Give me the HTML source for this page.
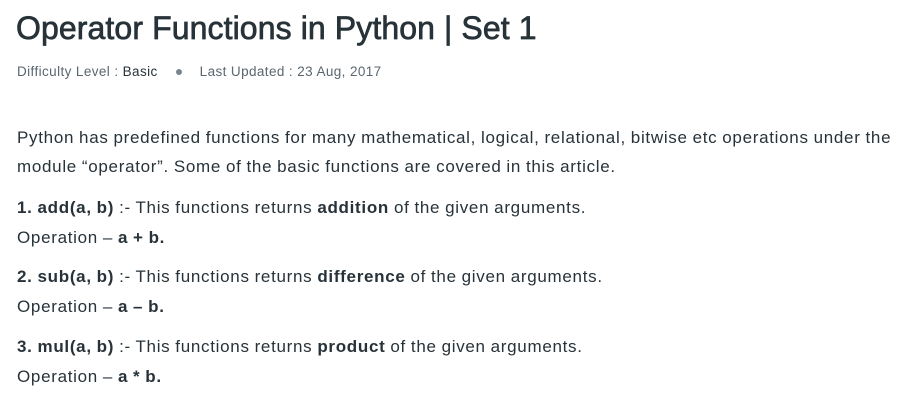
<!DOCTYPE html>
<html><head><meta charset="utf-8"><style>
html,body{margin:0;padding:0;background:#fff;width:918px;height:408px;overflow:hidden}
body{font-family:"Liberation Sans",sans-serif;color:#273239}
.l{position:absolute;left:17px;white-space:nowrap;font-size:17px;line-height:20px;letter-spacing:0.7px;word-spacing:-0.5px}
h1{position:absolute;left:16px;top:8px;margin:0;font-size:32px;line-height:40px;font-weight:normal;-webkit-text-stroke:0.7px #273239;color:#273239;white-space:nowrap;letter-spacing:0.1px}
.m{position:absolute;left:17px;top:63px;font-size:13.5px;line-height:18px;color:#5a6670;white-space:nowrap;letter-spacing:0.4px}
.m b{font-weight:normal;color:#273239}
.dot{display:inline-block;width:6px;height:6px;border-radius:50%;background:#7a858d;margin:0 18px 1px 18px;vertical-align:middle}
</style></head><body>
<h1>Operator Functions in Python | Set 1</h1>
<div class="m">Difficulty Level : <b>Basic</b><span class="dot"></span>Last Updated : 23 Aug, 2017</div>
<div class="l" style="top:128px">Python has predefined functions for many mathematical, logical, relational, bitwise etc operations under the</div>
<div class="l" style="top:157px">module “operator”. Some of the basic functions are covered in this article.</div>
<div class="l" style="top:198px"><b>1. add(a, b)</b> :- This functions returns <b>addition</b> of the given arguments.</div>
<div class="l" style="top:228px">Operation – <b>a + b.</b></div>
<div class="l" style="top:267px"><b>2. sub(a, b)</b> :- This functions returns <b>difference</b> of the given arguments.</div>
<div class="l" style="top:297px">Operation – <b>a – b.</b></div>
<div class="l" style="top:337px"><b>3. mul(a, b)</b> :- This functions returns <b>product</b> of the given arguments.</div>
<div class="l" style="top:367px">Operation – <b>a * b.</b></div>
</body></html>
